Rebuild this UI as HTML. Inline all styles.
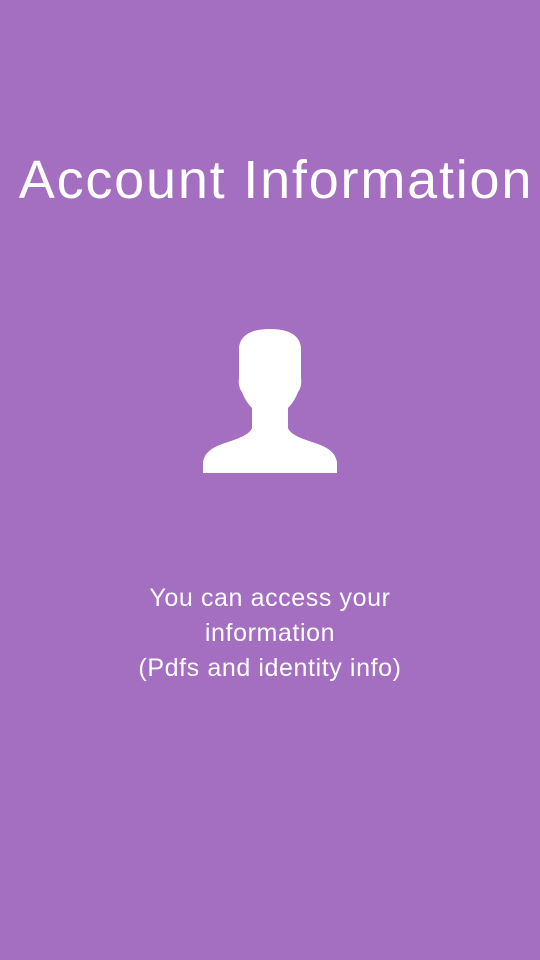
<!DOCTYPE html>
<html><head><style>
html,body{margin:0;padding:0;width:540px;height:960px;background:#a46ec1;overflow:hidden;font-family:"Liberation Sans",sans-serif;color:#fff}
h1{position:absolute;top:148px;left:6px;width:540px;text-align:center;margin:0;font-weight:normal;font-size:54px;letter-spacing:1.8px;line-height:64px}
p{position:absolute;top:581px;left:0;width:540px;text-align:center;margin:0;font-size:25px;letter-spacing:0.6px;line-height:35px}
svg{position:absolute;left:0;top:0}
</style></head><body>
<h1>Account Information</h1>
<svg width="540" height="960"><path fill="#fff" d="M270 329 C250 329 240 336 239 348 L239 378 C238 384 240 390 242 392 C245 400 249 405 252 408 L252 428 C250 434 240 438 228 442 C212 447 205 452 203 462 L203 473 L337 473 L337 462 C335 452 328 447 312 442 C300 438 290 434 288 428 L288 408 C291 405 295 400 298 392 C300 390 302 384 301 378 L301 348 C300 336 290 329 270 329Z"/></svg>
<p>You can access your<br>information<br>(Pdfs and identity info)</p>
</body></html>
